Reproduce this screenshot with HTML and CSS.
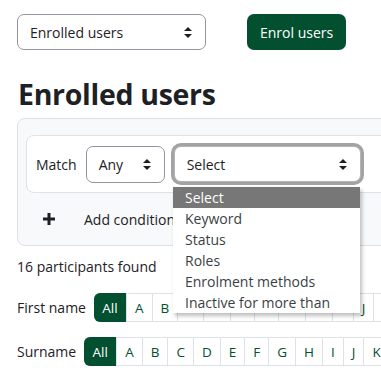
FILE: index.html
```html
<!DOCTYPE html>
<html lang="en">
<head>
  <meta charset="UTF-8">
  <meta name="viewport" content="width=device-width, initial-scale=1">
  <title>Enrolled users</title>
  <link rel="stylesheet" href="styles.css">
</head>
<body>
  <div class="page">
    <div class="top-row">
      <div class="custom-select select-top">
        <span>Enrolled users</span>
        <svg class="arrows" width="8" height="11" viewBox="0 0 8 11"><path d="M4 0 L8 4 H0 Z M0 7 H8 L4 11 Z" fill="#1d2125"/></svg>
      </div>
      <a class="btn-primary" href="#">Enrol users</a>
    </div>

    <h2>Enrolled users</h2>

    <div class="filter-box">
      <div class="filter-row">
        <span class="match-label">Match</span>
        <div class="custom-select select-any">
          <span>Any</span>
          <svg class="arrows" width="8" height="11" viewBox="0 0 8 11"><path d="M4 0 L8 4 H0 Z M0 7 H8 L4 11 Z" fill="#1d2125"/></svg>
        </div>
        <div class="custom-select select-type focused">
          <span>Select</span>
          <svg class="arrows" width="8" height="11" viewBox="0 0 8 11"><path d="M4 0 L8 4 H0 Z M0 7 H8 L4 11 Z" fill="#1d2125"/></svg>
        </div>
      </div>
      <div class="add-row">
        <svg class="plus" width="12" height="12" viewBox="0 0 12 12"><path d="M4.5 0 H7.5 V4.5 H12 V7.5 H7.5 V12 H4.5 V7.5 H0 V4.5 H4.5 Z" fill="#1d2125"/></svg>
        <span>Add condition</span>
      </div>
    </div>

    <p class="found">16 participants found</p>

    <div class="initials">
      <span class="initials-label">First name</span>
      <div class="letters">
        <a class="active" href="#">All</a><a href="#">A</a><a href="#">B</a><a href="#">C</a><a href="#">D</a><a href="#">E</a><a href="#">F</a><a href="#">G</a><a href="#">H</a><a href="#">I</a><a href="#">J</a><a href="#">K</a><a href="#">L</a><a href="#">M</a>
      </div>
    </div>

    <div class="initials">
      <span class="initials-label">Surname</span>
      <div class="letters">
        <a class="active" href="#">All</a><a href="#">A</a><a href="#">B</a><a href="#">C</a><a href="#">D</a><a href="#">E</a><a href="#">F</a><a href="#">G</a><a href="#">H</a><a href="#">I</a><a href="#">J</a><a href="#">K</a><a href="#">L</a><a href="#">M</a>
      </div>
    </div>

    <!-- open list of the focused select -->
    <ul class="dropdown">
      <li class="selected">Select</li>
      <li>Keyword</li>
      <li>Status</li>
      <li>Roles</li>
      <li>Enrolment methods</li>
      <li>Inactive for more than</li>
    </ul>
  </div>
</body>
</html>
```

FILE: styles.css
```css
* {
  margin: 0;
  padding: 0;
  box-sizing: border-box;
}
body {
  font-family: 'Open Sans', 'Noto Sans', sans-serif;
  color: #1d2125;
  background: #fff;
  width: 381px;
  height: 377px;
  overflow: hidden;
}
.page {
  position: relative;
  width: 700px;
  padding: 14px 0 0 17px;
}
.top-row {
  display: flex;
  gap: 41px;
  height: 36px;
}
.custom-select {
  display: flex;
  align-items: center;
  justify-content: space-between;
  border: 1px solid #8f959e;
  border-radius: 7px;
  padding: 0 13px 0 12px;
  font-size: 14px;
  background: #fff;
}
.select-top {
  width: 189px;
  height: 36px;
}
.btn-primary {
  display: flex;
  align-items: center;
  height: 36px;
  padding: 0 13px;
  border-radius: 7px;
  background: #02502f;
  color: #fff;
  font-size: 14px;
  text-decoration: none;
}
h2 {
  font-size: 28.5px;
  font-weight: 700;
  line-height: 36px;
  margin: 26px 0 6px 1px;
  letter-spacing: -0.3px;
}
.filter-box {
  width: 620px;
  background: #f8f9fa;
  border: 1px solid #dee2e6;
  border-radius: 8px;
  padding: 16px 8px 0;
}
.filter-row {
  display: flex;
  align-items: center;
  height: 58px;
  background: #fff;
  border: 1px solid #dee2e6;
  border-radius: 8px;
  padding: 0 9px;
}
.match-label {
  font-size: 14px;
  margin-right: 9px;
}
.select-any {
  width: 79px;
  height: 37px;
  margin-right: 9px;
}
.select-type {
  width: 187px;
  height: 36px;
}
.focused {
  border-color: #b5b5b5;
  box-shadow: 0 0 0 3px #a3a3a3;
}
.add-row {
  display: flex;
  align-items: center;
  height: 52px;
  padding-left: 17px;
  font-size: 14px;
}
.plus {
  margin-right: 29px;
}
.found {
  font-size: 14px;
  margin: 11px 0 0;
  line-height: 20px;
}
.initials {
  display: flex;
  align-items: center;
  margin-top: 16px;
}
.initials + .initials {
  margin-top: 15px;
}
.initials-label {
  font-size: 14px;
  margin-right: 8px;
}
.letters {
  display: flex;
  height: 29px;
  border: 1px solid #dee2e6;
  border-radius: 6px;
}
.letters a {
  display: flex;
  align-items: center;
  padding: 0 8px;
  font-size: 13.5px;
  color: #02502f;
  text-decoration: none;
  border-left: 1px solid #dee2e6;
}
.letters a.active {
  background: #02502f;
  color: #fff;
  border-left: none;
  border-radius: 6px 0 0 6px;
  margin: -1px 0 -1px -1px;
  padding: 0 8px;
  width: 32px;
  justify-content: center;
}
.dropdown {
  position: absolute;
  left: 173px;
  top: 187px;
  width: 187px;
  list-style: none;
  background: #fff;
  box-shadow: 2px 3px 4px rgba(0, 0, 0, 0.25);
  font-size: 14px;
  z-index: 10;
}
.dropdown li {
  height: 21px;
  line-height: 21px;
  padding-left: 12px;
  color: #3a3f44;
}
.dropdown li.selected {
  background: #777;
  color: #fff;
}
```
